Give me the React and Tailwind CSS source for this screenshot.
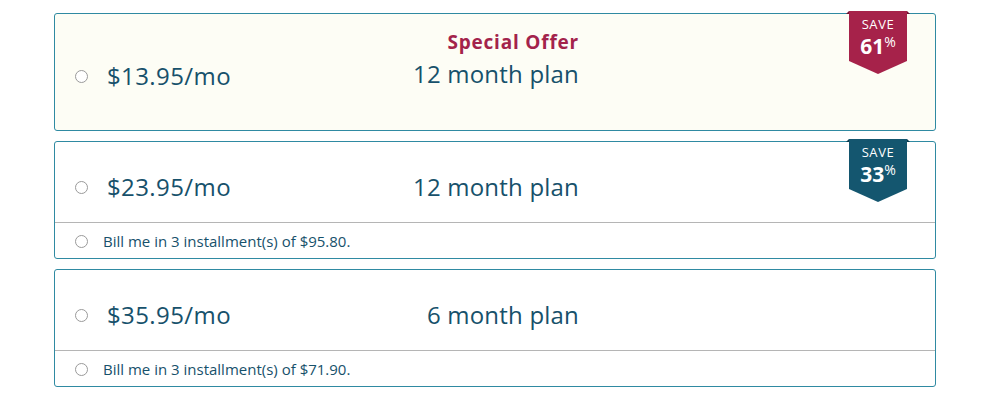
import React from 'react';

const plans = [
  { price: '$23.95/mo', plan: '12 month plan', save: '33', color: '#14566f', fold: '#0c3a4c', bill: '$95.80' },
  { price: '$35.95/mo', plan: '6 month plan', bill: '$71.90' },
];

function Radio() {
  return <span className="block w-[13px] h-[13px] rounded-full border border-[#9a9a9a] bg-white shrink-0" />;
}

function Ribbon({ pct, color, fold }) {
  return (
    <div className="absolute right-[25px] top-[-4px] w-[64px] h-[65px]">
      <svg width="64" height="65" viewBox="0 0 64 65" className="absolute inset-0">
        <polygon points="0,4 3,1 3,4" fill={fold} />
        <polygon points="64,4 61,1 61,4" fill={fold} />
        <polygon points="3,1 61,1 61,51 32,64 3,51" fill={color} />
      </svg>
      <div className="relative flex flex-col items-center pt-[6px] text-white">
        <span className="text-[13px] leading-[16px] tracking-[0.6px]">SAVE</span>
        <span className="flex items-start mt-[2px]">
          <span className="text-[21px] leading-[24px] font-bold">{pct}</span>
          <span className="text-[14px] leading-[14px] mt-[1px]">%</span>
        </span>
      </div>
    </div>
  );
}

export default function App() {
  return (
    <div className="w-[1000px] h-[400px] bg-white pt-[13px] pl-[54px] text-[#17516b]" style={{ fontFamily: '"Open Sans", sans-serif' }}>
      <div className="w-[882px] flex flex-col gap-[10px]">
        <div className="relative h-[118px] border border-[#2f8aa2] rounded-[3px] bg-[#fdfdf5]">
          <div className="flex items-start pt-[16px]">
            <div className="w-[344px] pt-[32px] pl-[20px] flex items-center gap-[19px]">
              <Radio />
              <span className="text-[24px] leading-[28px] tracking-[0.4px] whitespace-nowrap">$13.95/mo</span>
            </div>
            <div className="w-[180px] flex flex-col items-end whitespace-nowrap">
              <span className="text-[19px] leading-[24px] font-bold tracking-[0.8px] text-[#a3234b]">Special Offer</span>
              <span className="text-[24px] leading-[28px] mt-[6px] tracking-[0.2px]">12 month plan</span>
            </div>
          </div>
          <Ribbon pct="61" color="#a6224a" fold="#6f1230" />
        </div>
        {plans.map((p) => (
          <div key={p.price} className="relative h-[118px] border border-[#2f8aa2] rounded-[3px] bg-white flex flex-col">
            <div className="h-[81px] pt-[10px] flex items-center border-b border-[#b5b5b5]">
              <div className="w-[344px] pl-[20px] flex items-center gap-[19px]">
                <Radio />
                <span className="text-[24px] leading-[28px] tracking-[0.4px] whitespace-nowrap">{p.price}</span>
              </div>
              <div className="w-[180px] text-right text-[24px] leading-[28px] tracking-[0.2px] whitespace-nowrap">{p.plan}</div>
            </div>
            <div className="flex-1 flex items-center pl-[20px] gap-[15px] pt-[1px]">
              <Radio />
              <span className="text-[15px]">Bill me in 3 installment(s) of {p.bill}.</span>
            </div>
            {p.save && <Ribbon pct={p.save} color={p.color} fold={p.fold} />}
          </div>
        ))}
      </div>
    </div>
  );
}
